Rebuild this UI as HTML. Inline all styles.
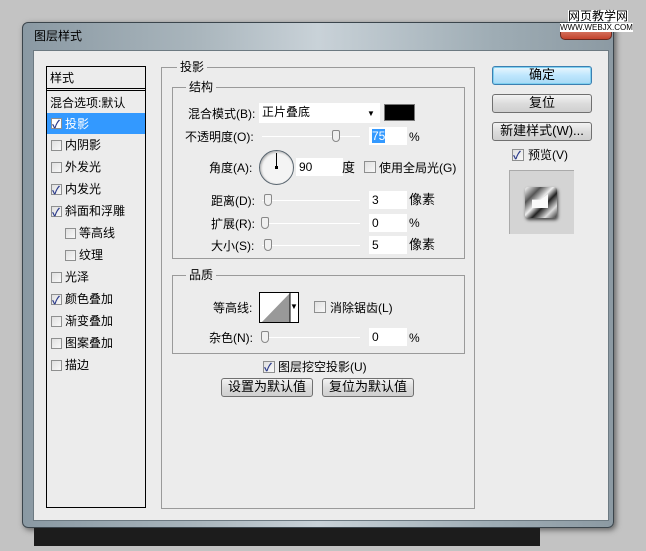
<!DOCTYPE html>
<html><head><meta charset="utf-8"><style>
*{margin:0;padding:0;box-sizing:border-box}
body{width:646px;height:551px;background:#c3c3c3;position:relative;overflow:hidden;font:12px "Liberation Sans","Noto Sans CJK SC",sans-serif;color:#000}
.a{position:absolute}
.frame{left:22px;top:22px;width:592px;height:506px;border-radius:6px;background:linear-gradient(90deg,#8a99a3,#aab6bd 30%,#c9d2d8 50%,#9eacb4 80%,#8c9aa3);border:1px solid #3b454c;box-shadow:2px 2px 6px rgba(0,0,0,.5)}
.client{left:33px;top:50px;width:576px;height:471px;background:#ececec;border:1px solid #6d7a82}
.shadow{left:34px;top:528px;width:506px;height:18px;background:#1c1c1c}
.t{white-space:nowrap;line-height:14px}
.cb{width:11px;height:11px;border:1px solid #8e8f8f;background:linear-gradient(135deg,#e0e0e0,#f8f8f8)}
.cb.on::after{content:"✓";position:absolute;left:0px;top:-3px;font-size:11px;color:#2a3a8a;font-weight:bold}
.row{left:47px;width:98px;height:22px;border-bottom:1px solid #d4d4d4}
.grp{border:1px solid #9a9a9a}
.lab{background:#ececec;padding:0 3px}
.inp{background:#fff;height:18px;padding:2px 3px;line-height:14px}
.sl{height:1px;background:#aaa;border-bottom:1px solid #fff}
.th{width:8px;height:12px;border:1px solid #888;border-radius:2px 2px 4px 4px;background:#f0f0f0}
.btn{border:1px solid #707070;border-radius:3px;background:linear-gradient(#f3f3f3,#dcdcdc 50%,#cfcfcf);text-align:center;line-height:16px;font-size:13px}
</style></head><body>
<div class="a frame"></div>
<div class="a t" style="left:34px;top:29px;font-size:12px">图层样式</div>
<div class="a" style="left:560px;top:23px;width:52px;height:17px;background:linear-gradient(#e7a08f,#c2432c);border-radius:0 5px 5px 5px;border:1px solid #6b2a20"></div>
<div class="a t" style="left:568px;top:10px;font-size:12px;background:#fff;line-height:12px">网页教学网</div>
<div class="a t" style="left:560px;top:23px;font-size:8px;background:#fff;line-height:9px">WWW.WEBJX.COM</div>
<div class="a shadow"></div>
<div class="a client"></div>

<!-- left list -->
<div class="a" style="left:46px;top:66px;width:100px;height:442px;border:1px solid #000;background:#ececec"></div>
<div class="a t" style="left:50px;top:71px">样式</div>
<div class="a" style="left:47px;top:88px;width:98px;height:3px;border-top:1px solid #000;border-bottom:1px solid #000"></div>
<div class="a t" style="left:50px;top:96px">混合选项:默认</div>
<div class="a" style="left:47px;top:113px;width:98px;height:21px;background:#3399ff"></div>
<div class="a cb on" style="left:51px;top:118px;background:#fff"></div><div class="a t" style="left:65px;top:117px;color:#fff">投影</div>
<div class="a cb" style="left:51px;top:140px"></div><div class="a t" style="left:65px;top:138px">内阴影</div>
<div class="a cb" style="left:51px;top:162px"></div><div class="a t" style="left:65px;top:160px">外发光</div>
<div class="a cb on" style="left:51px;top:184px"></div><div class="a t" style="left:65px;top:182px">内发光</div>
<div class="a cb on" style="left:51px;top:206px"></div><div class="a t" style="left:65px;top:204px">斜面和浮雕</div>
<div class="a cb" style="left:65px;top:228px"></div><div class="a t" style="left:79px;top:226px">等高线</div>
<div class="a cb" style="left:65px;top:250px"></div><div class="a t" style="left:79px;top:248px">纹理</div>
<div class="a cb" style="left:51px;top:272px"></div><div class="a t" style="left:65px;top:270px">光泽</div>
<div class="a cb on" style="left:51px;top:294px"></div><div class="a t" style="left:65px;top:292px">颜色叠加</div>
<div class="a cb" style="left:51px;top:316px"></div><div class="a t" style="left:65px;top:314px">渐变叠加</div>
<div class="a cb" style="left:51px;top:338px"></div><div class="a t" style="left:65px;top:336px">图案叠加</div>
<div class="a cb" style="left:51px;top:360px"></div><div class="a t" style="left:65px;top:358px">描边</div>

<!-- main group -->
<div class="a grp" style="left:161px;top:67px;width:314px;height:442px"></div>
<div class="a t lab" style="left:177px;top:60px">投影</div>
<div class="a grp" style="left:172px;top:87px;width:293px;height:172px"></div>
<div class="a t lab" style="left:186px;top:80px">结构</div>

<div class="a t" style="left:188px;top:107px">混合模式(B):</div>
<div class="a inp" style="left:259px;top:103px;width:121px;height:20px">正片叠底</div>
<div class="a t" style="left:367px;top:107px;font-size:8px">▼</div>
<div class="a" style="left:384px;top:104px;width:31px;height:17px;background:#000;border:1px solid #777"></div>

<div class="a t" style="left:185px;top:130px">不透明度(O):</div>
<div class="a sl" style="left:262px;top:136px;width:98px"></div>
<div class="a th" style="left:332px;top:130px"></div>
<div class="a inp" style="left:369px;top:127px;width:38px"><span style="background:#3399ff;color:#fff">75</span></div>
<div class="a t" style="left:409px;top:130px">%</div>

<div class="a t" style="left:209px;top:161px">角度(A):</div>
<div class="a" style="left:259px;top:150px;width:35px;height:35px;border-radius:50%;border:1px solid #5a6670;background:#f4f4f4;box-shadow:inset 1px 1px 2px #aaa"></div>
<div class="a" style="left:276px;top:153px;width:1px;height:15px;background:#000"></div>
<div class="a" style="left:275px;top:166px;width:3px;height:3px;background:#000"></div>
<div class="a inp" style="left:296px;top:158px;width:47px">90</div>
<div class="a t" style="left:342px;top:161px;font-size:13px">度</div>
<div class="a cb" style="left:364px;top:161px;width:12px;height:12px"></div>
<div class="a t" style="left:379px;top:161px">使用全局光(G)</div>

<div class="a t" style="left:211px;top:194px">距离(D):</div>
<div class="a sl" style="left:262px;top:200px;width:98px"></div><div class="a th" style="left:264px;top:194px"></div>
<div class="a inp" style="left:369px;top:191px;width:38px">3</div><div class="a t" style="left:409px;top:193px;font-size:13px">像素</div>
<div class="a t" style="left:211px;top:217px">扩展(R):</div>
<div class="a sl" style="left:262px;top:223px;width:98px"></div><div class="a th" style="left:261px;top:217px"></div>
<div class="a inp" style="left:369px;top:214px;width:38px">0</div><div class="a t" style="left:409px;top:216px">%</div>
<div class="a t" style="left:211px;top:239px">大小(S):</div>
<div class="a sl" style="left:262px;top:245px;width:98px"></div><div class="a th" style="left:264px;top:239px"></div>
<div class="a inp" style="left:369px;top:236px;width:38px">5</div><div class="a t" style="left:409px;top:238px;font-size:13px">像素</div>

<div class="a grp" style="left:172px;top:275px;width:293px;height:79px"></div>
<div class="a t lab" style="left:186px;top:268px">品质</div>
<div class="a t" style="left:213px;top:301px">等高线:</div>
<div class="a" style="left:259px;top:292px;width:40px;height:31px;border:1px solid #000;background:#fff;overflow:hidden">
<svg width="40" height="31" style="position:absolute;left:0;top:0"><polygon points="0,31 30,0 30,31" fill="#999"/><line x1="30" y1="0" x2="30" y2="31" stroke="#000"/></svg></div>
<div class="a t" style="left:290px;top:300px;font-size:8px">▼</div>
<div class="a cb" style="left:314px;top:301px;width:12px;height:12px"></div>
<div class="a t" style="left:330px;top:301px">消除锯齿(L)</div>
<div class="a t" style="left:209px;top:331px">杂色(N):</div>
<div class="a sl" style="left:262px;top:337px;width:98px"></div><div class="a th" style="left:261px;top:331px"></div>
<div class="a inp" style="left:369px;top:328px;width:38px">0</div><div class="a t" style="left:409px;top:331px">%</div>

<div class="a cb on" style="left:263px;top:361px;width:12px;height:12px"></div>
<div class="a t" style="left:278px;top:360px">图层挖空投影(U)</div>
<div class="a btn" style="left:221px;top:378px;width:92px;height:19px">设置为默认值</div>
<div class="a btn" style="left:322px;top:378px;width:92px;height:19px">复位为默认值</div>

<!-- right -->
<div class="a btn" style="left:492px;top:66px;width:100px;height:19px;border-color:#3c7fb1;background:linear-gradient(#eaf6fd,#bee6fd 50%,#a7d9f5);box-shadow:0 0 0 1px #7fd0f0 inset">确定</div>
<div class="a btn" style="left:492px;top:94px;width:100px;height:19px">复位</div>
<div class="a btn" style="left:492px;top:122px;width:100px;height:19px">新建样式(W)...</div>
<div class="a cb on" style="left:512px;top:149px;width:12px;height:12px"></div>
<div class="a t" style="left:528px;top:148px">预览(V)</div>
<div class="a" style="left:509px;top:170px;width:65px;height:64px;background:#d4d4d4;border-left:1px solid #aaa;border-top:1px solid #aaa"></div>
<div class="a" style="left:525px;top:187px;width:32px;height:31px;background:linear-gradient(135deg,#fff 0%,#555 25%,#eee 45%,#222 60%,#ddd 80%,#333);border-radius:3px;box-shadow:1px 2px 3px #444"></div>
<div class="a" style="left:532px;top:194px;width:16px;height:14px;background:#fafafa;clip-path:polygon(0 40%,55% 40%,100% 0,100% 100%,0 100%)"></div>
</body></html>
